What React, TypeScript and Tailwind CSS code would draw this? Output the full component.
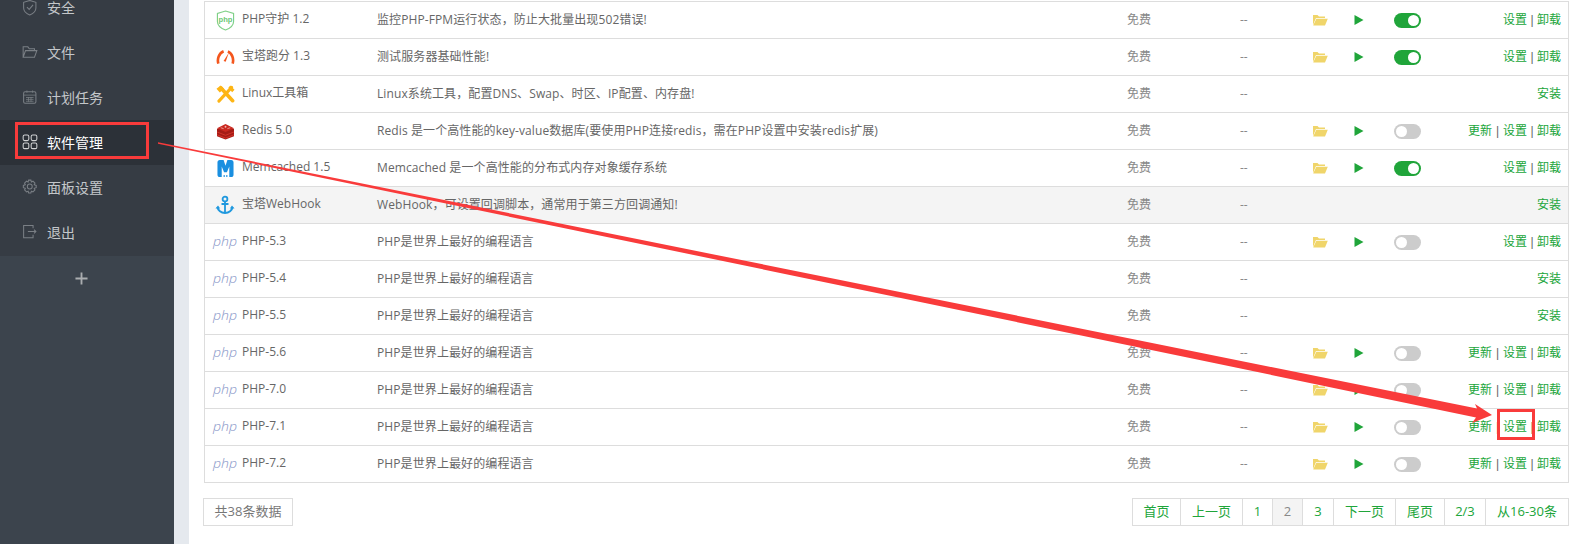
import type { ReactNode } from 'react';

const FONT = 'font-["Open_Sans","Noto_Sans_CJK_SC",sans-serif]';

type IconKind = 'guard' | 'gauge' | 'tools' | 'redis' | 'memcached' | 'anchor' | 'php';

type Plugin = {
  name: string;
  desc: string;
  icon: IconKind;
  installed: boolean;
  on?: boolean;
  update?: boolean;
  hover?: boolean;
};

const PHP_DESC = 'PHP是世界上最好的编程语言';

const plugins: Plugin[] = [
  { name: 'PHP守护 1.2', desc: '监控PHP-FPM运行状态，防止大批量出现502错误!', icon: 'guard', installed: true, on: true },
  { name: '宝塔跑分 1.3', desc: '测试服务器基础性能!', icon: 'gauge', installed: true, on: true },
  { name: 'Linux工具箱', desc: 'Linux系统工具，配置DNS、Swap、时区、IP配置、内存盘!', icon: 'tools', installed: false },
  { name: 'Redis 5.0', desc: 'Redis 是一个高性能的key-value数据库(要使用PHP连接redis，需在PHP设置中安装redis扩展)', icon: 'redis', installed: true, update: true },
  { name: 'Memcached 1.5', desc: 'Memcached 是一个高性能的分布式内存对象缓存系统', icon: 'memcached', installed: true, on: true },
  { name: '宝塔WebHook', desc: 'WebHook，可设置回调脚本，通常用于第三方回调通知!', icon: 'anchor', installed: false, hover: true },
  { name: 'PHP-5.3', desc: PHP_DESC, icon: 'php', installed: true },
  { name: 'PHP-5.4', desc: PHP_DESC, icon: 'php', installed: false },
  { name: 'PHP-5.5', desc: PHP_DESC, icon: 'php', installed: false },
  { name: 'PHP-5.6', desc: PHP_DESC, icon: 'php', installed: true, update: true },
  { name: 'PHP-7.0', desc: PHP_DESC, icon: 'php', installed: true, update: true },
  { name: 'PHP-7.1', desc: PHP_DESC, icon: 'php', installed: true, update: true },
  { name: 'PHP-7.2', desc: PHP_DESC, icon: 'php', installed: true, update: true },
];

const navIcons: Record<string, ReactNode> = {
  shield: (
    <>
      <path d="M8 1.5 L14.5 3.5 V9.5 C14.5 13 11.5 15.5 8 17 C4.5 15.5 1.5 13 1.5 9.5 V3.5 Z" />
      <path d="M5 8.5 L7.4 11 L11.5 6.2" />
    </>
  ),
  folder: <path d="M1 14 V3 H6 L7.5 5 H13 V7 M1 14 L3.5 7 H15.5 L13 14 Z" />,
  calendar: (
    <>
      <rect x="1.5" y="3" width="13" height="12" rx="1.5" />
      <path d="M1.5 6.5 H14.5 M5 1.5 V4 M11 1.5 V4 M4 9 H12 M4 11 H12 M4 13 H12 M6.7 8.5 V13.5 M9.3 8.5 V13.5" strokeWidth="0.8" />
    </>
  ),
  apps: (
    <>
      <rect x="1" y="1" width="6" height="6" rx="1.6" />
      <rect x="9.5" y="1" width="6" height="6" rx="1.6" />
      <rect x="1" y="9.5" width="6" height="6" rx="1.6" />
      <rect x="9.5" y="9.5" width="6" height="6" rx="1.6" />
    </>
  ),
  gear: (
    <>
      <circle cx="8" cy="8" r="2.6" />
      <path d="M6.8 1.2 H9.2 L9.7 3.1 L11.4 2.3 L13.5 4.4 L12.7 6.1 L14.8 6.8 V9.2 L12.7 9.9 L13.5 11.6 L11.4 13.7 L9.7 12.9 L9.2 14.8 H6.8 L6.3 12.9 L4.6 13.7 L2.5 11.6 L3.3 9.9 L1.2 9.2 V6.8 L3.3 6.1 L2.5 4.4 L4.6 2.3 L6.3 3.1 Z" />
    </>
  ),
  logout: <path d="M11.5 4.5 V1.5 H1.5 V14.5 H11.5 V11.5 M6 8 H14.5 M12.5 6 L14.5 8 L12.5 10" />,
};

const navItems = [
  { label: '安全', icon: 'shield' },
  { label: '文件', icon: 'folder' },
  { label: '计划任务', icon: 'calendar' },
  { label: '软件管理', icon: 'apps', active: true },
  { label: '面板设置', icon: 'gear' },
  { label: '退出', icon: 'logout' },
];

function PluginIcon({ kind }: { kind: IconKind }) {
  if (kind === 'guard') {
    return (
      <svg viewBox="0 0 20 22" className="h-[21px] w-[19px]">
        <path d="M10 1 L18.5 3.5 V12 C18.5 16.5 14 19.5 10 21 C6 19.5 1.5 16.5 1.5 12 V3.5 Z" fill="none" stroke="#7fd087" strokeWidth="1.2" />
        <text x="10" y="13" textAnchor="middle" fontSize="8" fontWeight="700" fill="#6cc776" fontFamily="Liberation Sans, sans-serif">php</text>
      </svg>
    );
  }
  if (kind === 'gauge') {
    return (
      <svg viewBox="0 0 20 16" className="h-[16px] w-[19px]">
        <path d="M2.5 15 C1 10 3 4 8 2 M12.5 2.2 C17 4 19 10 17.5 15" fill="none" stroke="#f4561d" strokeWidth="2.8" />
        <path d="M13.5 3.5 L10.2 13 L8 12.2 Z" fill="#f4561d" />
      </svg>
    );
  }
  if (kind === 'tools') {
    return (
      <svg viewBox="0 0 20 20" className="h-[19px] w-[19px]">
        <path d="M5 3 L17.5 16.5" stroke="#fdb515" strokeWidth="3.8" strokeLinecap="round" />
        <path d="M16.5 2.5 L3 17" stroke="#fdb515" strokeWidth="3.2" strokeLinecap="round" />
        <path d="M0.5 4 L4 8 L8.5 4 L5 0.5 Z M15 0.5 L19.5 5 L17 7.5 L13 3 Z" fill="#fdb515" />
      </svg>
    );
  }
  if (kind === 'redis') {
    return (
      <svg viewBox="0 0 20 18" className="h-[17px] w-[19px]">
        <path d="M1 6 V14 L10 17.5 L19 14 V6 Z" fill="#a51c16" />
        <path d="M1 9.5 L10 13 L19 9.5 M1 12.5 L10 16 L19 12.5" fill="none" stroke="#d9362c" strokeWidth="0.9" />
        <path d="M1 5.5 L10 1 L19 5.5 L10 9.5 Z" fill="#c9281f" />
        <circle cx="10" cy="4" r="1" fill="#f3b7b2" />
        <path d="M5 5 L8 6 M12 6 L15 5" stroke="#f3b7b2" strokeWidth="0.8" />
      </svg>
    );
  }
  if (kind === 'memcached') {
    return (
      <svg viewBox="0 0 18 18" className="h-[17px] w-[17px]">
        <path d="M3 0 H7 L9 6 L11 0 H15 C16.6 0 17.5 1 17.5 2.5 V15.5 C17.5 17 16.6 18 15 18 H13 V7 L10.5 13 H7.5 L5 7 V18 H3 C1.4 18 0.5 17 0.5 15.5 V2.5 C0.5 1 1.4 0 3 0 Z" fill="#1a8fe0" />
        <path d="M7 16 H8.2 V18 H7 Z M9.8 16 H11 V18 H9.8 Z" fill="#1a8fe0" />
      </svg>
    );
  }
  if (kind === 'anchor') {
    return (
      <svg viewBox="0 0 20 20" className="h-[20px] w-[20px]">
        <circle cx="10" cy="4" r="2.4" fill="none" stroke="#1f98de" strokeWidth="1.8" />
        <path d="M10 6.5 V18 M6.5 9 H13.5" stroke="#1f98de" strokeWidth="1.8" fill="none" />
        <path d="M2.5 12 C3 15.5 6 18 10 18 C14 18 17 15.5 17.5 12" stroke="#1f98de" strokeWidth="2" fill="none" />
        <path d="M0.5 13.5 L3 10.5 L5.2 13.5 Z M14.8 13.5 L17 10.5 L19.5 13.5 Z" fill="#1f98de" />
      </svg>
    );
  }
  return (
    <svg viewBox="0 0 28 20" className="mt-[2px] h-[20px] w-[28px] shrink-0">
      <text x="2" y="13" fontSize="13" fontStyle="italic" fontWeight="300" fill="#8593c6" textLength="24" lengthAdjust="spacingAndGlyphs" fontFamily="Open Sans, sans-serif">php</text>
    </svg>
  );
}

function Toggle({ on }: { on?: boolean }) {
  return (
    <div className={`flex h-[15px] w-[27px] rounded-full p-[2px] ${on ? 'justify-end bg-[#20a53a]' : 'justify-start bg-[#cccccc]'}`}>
      <div className="size-[11px] rounded-full bg-white" />
    </div>
  );
}

function Sep({ wide }: { wide?: boolean }) {
  return <span className={`inline-block text-center text-[#666] font-["Liberation_Sans",sans-serif] ${wide ? 'w-[11px]' : 'w-[10px]'}`}>|</span>;
}

function Actions({ plugin }: { plugin: Plugin }) {
  if (!plugin.installed) return <span className="text-[#20a53a]">安装</span>;
  return (
    <>
      {plugin.update && (
        <>
          <span className="text-[#20a53a]">更新</span>
          <Sep wide />
        </>
      )}
      <span className="text-[#20a53a]">设置</span>
      <Sep />
      <span className="text-[#20a53a]">卸载</span>
    </>
  );
}

function PluginRow({ plugin }: { plugin: Plugin }) {
  return (
    <div className={`flex h-[37px] items-center border-b border-[#dddddd] text-[12px] text-[#666666] ${plugin.hover ? 'bg-[#f4f4f4]' : ''}`}>
      <div className="ml-[10px] flex w-[26px] shrink-0 -translate-x-[3px] items-center justify-center">
        <PluginIcon kind={plugin.icon} />
      </div>
      <div className="ml-[1px] w-[135px] shrink-0 pb-[2px] whitespace-nowrap">{plugin.name}</div>
      <div className="w-[750px] shrink-0 tracking-[0.1px] whitespace-nowrap">{plugin.desc}</div>
      <div className="w-[113px] shrink-0 text-[#888888]">免费</div>
      <div className="w-[72px] shrink-0 text-[#888888]">--</div>
      <div className="w-[42px] shrink-0">
        {plugin.installed && (
          <svg viewBox="0 0 16 12" className="h-[12px] w-[16px]">
            <path d="M1 11 V1 H5.5 L7 2.5 H13 V4 H4 L1 11 Z" fill="#f0d56a" />
            <path d="M1.2 11.5 L4.3 4.8 H15.8 L13 11.5 Z" fill="#f0d56a" />
          </svg>
        )}
      </div>
      <div className="w-[40px] shrink-0">
        {plugin.installed && (
          <svg viewBox="0 0 10 10" className="size-[10px]">
            <path d="M0.5 0 L9.5 5 L0.5 10 Z" fill="#20a53a" />
          </svg>
        )}
      </div>
      <div className="w-[39px] shrink-0">{plugin.installed && <Toggle on={plugin.on} />}</div>
      <div className="flex-1 pr-[7px] text-right whitespace-nowrap">
        <Actions plugin={plugin} />
      </div>
    </div>
  );
}

const pages = [
  { label: '首页', w: 'w-[48px]' },
  { label: '上一页', w: 'w-[62px]' },
  { label: '1', w: 'w-[30px]' },
  { label: '2', w: 'w-[30px]', current: true },
  { label: '3', w: 'w-[31px]' },
  { label: '下一页', w: 'w-[62px]' },
  { label: '尾页', w: 'w-[49px]' },
  { label: '2/3', w: 'w-[41px]' },
  { label: '从16-30条', w: 'w-[82px]' },
];

export default function App() {
  return (
    <div className={`relative flex h-[544px] w-[1579px] overflow-hidden bg-white ${FONT}`}>
      <aside className="flex w-[174px] shrink-0 flex-col bg-[#3c444d]">
        <nav className="-mt-[15px] bg-[#363c44] pb-[1px]">
          {navItems.map((item) => (
            <div
              key={item.label}
              className={`flex h-[45px] items-center pl-[22px] text-[14px] ${item.active ? 'bg-[#2c3138] text-white' : 'text-[#c4c7ca]'}`}
            >
              <svg
                viewBox="0 0 16.5 18"
                fill="none"
                stroke={item.active ? '#d0d2d4' : '#7a7f85'}
                strokeWidth="1.1"
                className="mr-[9px] h-[17px] w-[16px]"
              >
                {navIcons[item.icon]}
              </svg>
              {item.label}
            </div>
          ))}
        </nav>
        <div className="flex h-[44px] items-center justify-center pr-[11px] text-[#aaadb0]">
          <svg viewBox="0 0 14 14" className="size-[13px]" fill="none" stroke="currentColor" strokeWidth="2">
            <path d="M7 0.5 V13.5 M0.5 7 H13.5" />
          </svg>
        </div>
      </aside>
      <div className="w-[15px] shrink-0 bg-[#e5e9ee]" />
      <main className="flex-1 pt-[1px] pr-[10px] pl-[15px]">
        <div className="border-x border-t border-[#dddddd]">
          {plugins.map((plugin) => (
            <PluginRow key={plugin.name} plugin={plugin} />
          ))}
        </div>
        <div className="mt-[15px] flex items-start justify-between text-[13px]">
          <div className="-ml-[1px] flex h-[28px] w-[90px] items-center justify-center border border-[#dddddd] text-[#777777]">
            共38条数据
          </div>
          <div className="flex h-[28px] divide-x divide-[#dddddd] border border-[#dddddd] text-[#20a53a]">
            {pages.map((page) => (
              <div
                key={page.label}
                className={`flex items-center justify-center whitespace-nowrap ${page.w} ${page.current ? 'bg-[#f4f4f4] text-[#888888]' : ''}`}
              >
                {page.label}
              </div>
            ))}
          </div>
        </div>
      </main>
      {/* 标注：箭头和红框 */}
      <svg className="pointer-events-none absolute inset-0" width="1579" height="544">
        <path d="M158 142.3 L1477 408.5 L1475 404 L1492 415 L1472 423 L1476 417.5 L158 143.7 Z" fill="#f93b3b" />
      </svg>
      <div className="pointer-events-none absolute top-[122px] left-[15px] h-[37px] w-[134px] border-[3px] border-[#f93b3b]" />
      <div className="pointer-events-none absolute top-[409px] left-[1497px] h-[31px] w-[38px] border-[3px] border-[#f93b3b]" />
    </div>
  );
}
